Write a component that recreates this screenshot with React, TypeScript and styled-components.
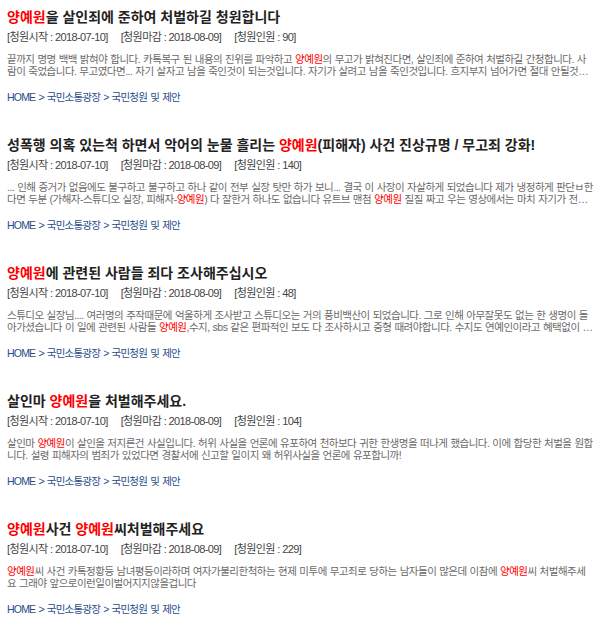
import React from 'react';
import styled, { createGlobalStyle } from 'styled-components';

type Seg = string | { hl: string };

interface Petition {
  title: Seg[]
  count: number
  desc: Seg[]
}

const GlobalStyle = createGlobalStyle`
  html, body {
    margin: 0;
    padding: 0;
    background: #ffffff;
  }
  body {
    font-family: "Liberation Sans", "Noto Sans CJK KR", sans-serif;
  }
`

const List = styled('div')`
    padding: 0 7px;
    width: 587px;
`

const Item = styled('div')`
    padding: 7px 0 23px;
`

const Title = styled('h2')`
    margin: 0;
    font-size: 14px;
    line-height: 20px;
    font-weight: bold;
    color: #222222;
    white-space: nowrap;
`

const Meta = styled('div')`
    margin-top: 2px;
    display: flex;
    gap: 13px;
    font-size: 11px;
    line-height: 16px;
    letter-spacing: -0.6px;
    color: #444444;
`

const Desc = styled('p')`
    margin: 8px 0 0;
    font-size: 10.5px;
    line-height: 12px;
    letter-spacing: -0.5px;
    word-spacing: 0.5px;
    color: #6a6a6a;
    display: -webkit-box;
    -webkit-line-clamp: 2;
    -webkit-box-orient: vertical;
    overflow: hidden;
    height: 24px;
`

const Crumb = styled('div')`
    margin-top: 12px;
    font-size: 10.5px;
    line-height: 16px;
    letter-spacing: -0.8px;
    word-spacing: 1px;
    color: #2c4c88;
`

const Hl = styled('span')<{ $inline?: boolean }>`
    color: #ff0000;
    display: ${(p) => (p.$inline ? 'inline-block' : 'inline')};
    line-height: inherit;
`

const NAME = { hl: '양예원' };

const petitions: Petition[] = [
  {
    title: [NAME, '을 살인죄에 준하여 처벌하길 청원합니다'],
    count: 90,
    desc: ['끝까지 명명 백백 밝혀야 합니다. 카톡복구 된 내용의 진위를 파악하고 ', NAME, '의 무고가 밝혀진다면, 살인죄에 준하여 처벌하길 간청합니다. 사람이 죽었습니다. 무고였다면... 자기 살자고 남을 죽인것이 되는것입니다. 자기가 살려고 남을 죽인것입니다. 흐지부지 넘어가면 절대 안될것…'],
  },
  {
    title: ['성폭행 의혹 있는척 하면서 악어의 눈물 흘리는 ', NAME, '(피해자) 사건 진상규명 / 무고죄 강화!'],
    count: 140,
    desc: ['... 인해 증거가 없음에도 불구하고 불구하고 하나 같이 전부 실장 탓만 하가 보니... 결국 이 사장이 자살하게 되었습니다 제가 냉정하게 판단ㅂ한다면 두분 (가해자-스튜디오 실장, 피해자-', NAME, ') 다 잘한거 하나도 없습니다 유트브 맨첨 ', NAME, ' 질질 짜고 우는 영상에서는 마치 자기가 전…'],
  },
  {
    title: [NAME, '에 관련된 사람들 죄다 조사해주십시오'],
    count: 48,
    desc: ['스튜디오 실장님.... 여러명의 주작때문에 억울하게 조사받고 스튜디오는 거의 풍비백산이 되었습니다. 그로 인해 아무잘못도 없는 한 생명이 돌아가셨습니다 이 일에 관련된 사람들 ', NAME, ',수지, sbs 같은 편파적인 보도 다 조사하시고 중형 때려야합니다. 수지도 연예인이라고 혜택없이 …'],
  },
  {
    title: ['살인마 ', NAME, '을 처벌해주세요.'],
    count: 104,
    desc: ['살인마 ', NAME, '이 살인을 저지른건 사실입니다. 허위 사실을 언론에 유포하여 천하보다 귀한 한생명을 떠나게 했습니다. 이에 합당한 처벌을 원합니다. 설령 피해자의 범죄가 있었다면 경찰서에 신고할 일이지 왜 허위사실을 언론에 유포합니까!'],
  },
  {
    title: [NAME, '사건 ', NAME, '씨처벌해주세요'],
    count: 229,
    desc: [NAME, '씨 사건 카톡정황등 남녀평등이라하며 여자가불리한척하는 현제 미투에 무고죄로 당하는 남자들이 많은데 이참에 ', NAME, '씨 처벌해주세요 그래야 앞으로이런일이벌어지지않을겁니다'],
  },
];

function renderSegs(segs: Seg[], inline?: boolean) {
  return segs.map((s, i) =>
    typeof s === 'string'
      ? <React.Fragment key={i}>{s}</React.Fragment>
      : <Hl key={i} $inline={inline}>{s.hl}</Hl>
  );
}

function App() {
  return (
    <>
      <GlobalStyle />
      <List>
        {petitions.map((p, i) => (
          <Item key={i}>
            <Title>{renderSegs(p.title)}</Title>
            <Meta>
              <span>[청원시작 : 2018-07-10]</span>
              <span>[청원마감 : 2018-08-09]</span>
              <span>[청원인원 : {p.count}]</span>
            </Meta>
            <Desc>{renderSegs(p.desc, true)}</Desc>
            <Crumb>HOME &gt; 국민소통광장 &gt; 국민청원 및 제안</Crumb>
          </Item>
        ))}
      </List>
    </>
  );
}
export default App;
